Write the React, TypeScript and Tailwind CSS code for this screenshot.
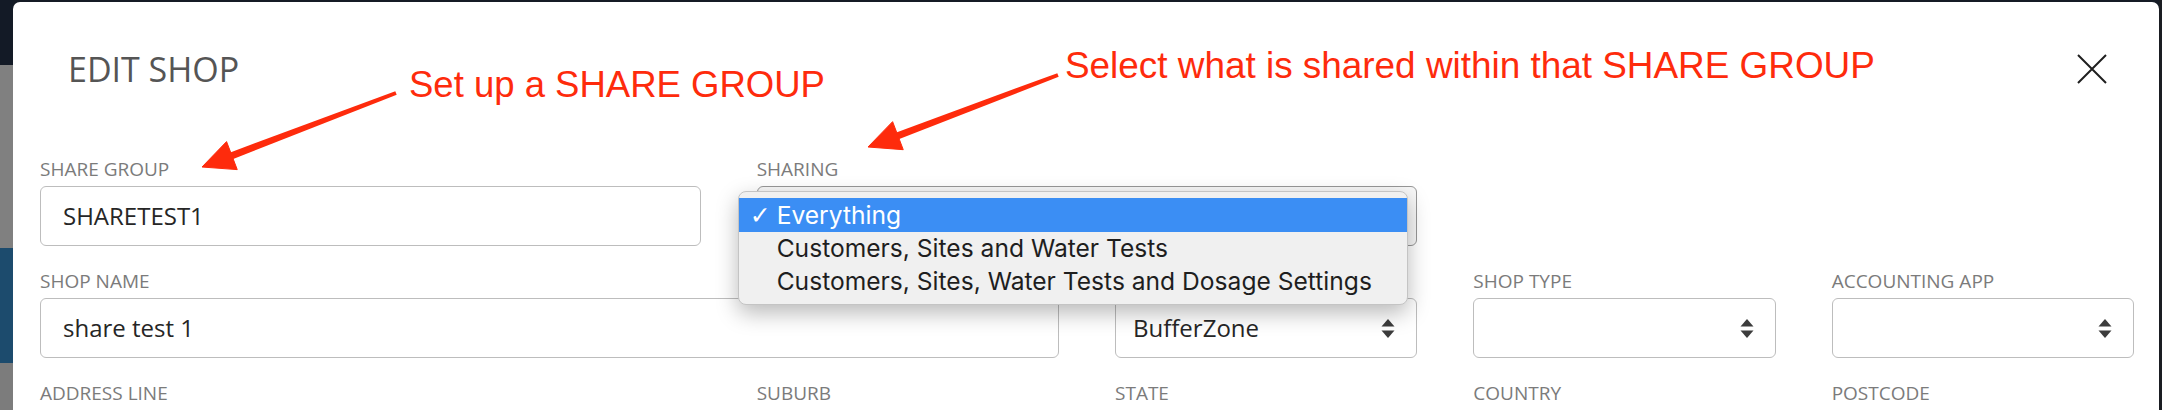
import React from "react";

type Pt = [number, number];

// Skitch-style red arrow: tapered shaft plus a solid triangular head
function Arrow({ from, to }: { from: Pt; to: Pt }) {
  const dx = to[0] - from[0];
  const dy = to[1] - from[1];
  const len = Math.hypot(dx, dy);
  const ux = dx / len;
  const uy = dy / len;
  const px = -uy;
  const py = ux;
  const headLen = 32;
  const headHalf = 15;
  const bx = to[0] - ux * headLen;
  const by = to[1] - uy * headLen;
  const tail = 2;
  const neck = 3.6;
  const shaft = [
    [from[0] + px * tail, from[1] + py * tail],
    [bx + ux * 4 + px * neck, by + uy * 4 + py * neck],
    [bx + ux * 4 - px * neck, by + uy * 4 - py * neck],
    [from[0] - px * tail, from[1] - py * tail],
  ];
  const head = [
    [to[0], to[1]],
    [bx + px * headHalf, by + py * headHalf],
    [bx - px * headHalf, by - py * headHalf],
  ];
  const toStr = (p: number[][]) => p.map((q) => q.join(",")).join(" ");
  return (
    <g fill="#fe2b0c">
      <polygon points={toStr(shaft)} />
      <polygon points={toStr(head)} strokeLinejoin="round" stroke="#fe2b0c" strokeWidth={1} />
    </g>
  );
}

function UpDown() {
  return (
    <svg width="14" height="19" viewBox="0 0 14 19" className="shrink-0">
      <path d="M7 0 L13.5 7.5 L0.5 7.5 Z" fill="#3c3c3c" />
      <path d="M7 19 L13.5 11.5 L0.5 11.5 Z" fill="#3c3c3c" />
    </svg>
  );
}

function Field({
  label,
  className = "",
  children,
}: {
  label?: string;
  className?: string;
  children?: React.ReactNode;
}) {
  return (
    <div className={`relative flex flex-col ${className}`}>
      <div className="mb-[5px] h-[24px] text-[19px] leading-[24px] text-[#7b7b7b] uppercase">{label}</div>
      {children}
    </div>
  );
}

function TextBox({ value }: { value?: string }) {
  return (
    <div className="flex h-[60px] items-center rounded-[6px] border border-[#bdbdbd] bg-white pl-[22px] text-[24px] text-[#262626]">
      {value}
    </div>
  );
}

function SelectBox({ value }: { value?: string }) {
  return (
    <div className="flex h-[60px] items-center justify-between rounded-[6px] border border-[#bdbdbd] bg-white pl-[17px] pr-[21px] text-[24px] text-[#262626]">
      <span>{value}</span>
      <UpDown />
    </div>
  );
}

const sharingOptions = [
  "Everything",
  "Customers, Sites and Water Tests",
  "Customers, Sites, Water Tests and Dosage Settings",
];

function SharingMenu() {
  return (
    <div className="absolute top-[34px] left-[-19px] z-10 w-[670px] rounded-[8px] border border-[#c4c4c4] bg-[#f0f0f0] py-[6px] font-['Inter',sans-serif] shadow-[0_8px_22px_rgba(0,0,0,0.28)]">
      {sharingOptions.map((opt, i) => (
        <div
          key={opt}
          className={`flex items-center text-[24.6px] leading-[33px] ${
            i === 0 ? "h-[34px] bg-[#3b8ef4] text-white" : "h-[33px] text-[#1e1e1e]"
          }`}
        >
          <span className="w-[38px] pl-[11px] font-['DejaVu_Sans',sans-serif] text-[25px]">{i === 0 ? "✓" : ""}</span>
          <span>{opt}</span>
        </div>
      ))}
    </div>
  );
}

export default function App() {
  return (
    <div className="relative flex h-[410px] w-[2162px] overflow-hidden bg-[#151b25] font-['Open_Sans',sans-serif]">
      {/* page behind the dialog, dimmed */}
      <div className="flex w-[13px] shrink-0 flex-col">
        <div className="h-[65px] bg-[#131a26]" />
        <div className="h-[183px] bg-[#808080]" />
        <div className="h-[115px] bg-[#1c4b6d]" />
        <div className="flex-1 bg-[#7c7c7c]" />
      </div>

      <div className="mt-[2px] flex-1 rounded-t-[7px] bg-white pr-[25px] pl-[27px]">
        <header className="flex items-center justify-between pt-[44px] pr-[27px] pl-[28px]">
          <h1 className="h-[46px] text-[34px] leading-[46px] font-normal text-[#555555]">EDIT SHOP</h1>
          <svg width="30" height="30" viewBox="0 0 30 30">
            <path d="M1 1 L29 29 M29 1 L1 29" stroke="#1f1f1f" strokeWidth="2" />
          </svg>
        </header>

        <div className="mt-[65px] grid grid-cols-6 gap-x-[56px] gap-y-[23px]">
          <Field label="Share Group" className="col-span-2">
            <TextBox value="SHARETEST1" />
          </Field>
          <Field label="Sharing" className="col-span-2">
            <div className="h-[60px] rounded-[6px] border border-[#979797] bg-[#f7f7f7]" />
            <SharingMenu />
          </Field>
          <div className="col-span-2" />

          <Field label="Shop Name" className="col-span-3">
            <TextBox value="share test 1" />
          </Field>
          {/* label sits under the open sharing menu */}
          <Field>
            <SelectBox value="BufferZone" />
          </Field>
          <Field label="Shop Type">
            <SelectBox />
          </Field>
          <Field label="Accounting App">
            <SelectBox />
          </Field>

          <Field label="Address Line" className="col-span-2">
            <TextBox />
          </Field>
          <Field label="Suburb">
            <TextBox />
          </Field>
          <Field label="State">
            <SelectBox />
          </Field>
          <Field label="Country">
            <SelectBox />
          </Field>
          <Field label="Postcode">
            <TextBox />
          </Field>
        </div>
      </div>

      <div className="w-[3px] shrink-0 bg-[#1a1d22]" />

      {/* annotations drawn on top */}
      <div className="pointer-events-none absolute inset-0 z-20 font-['Liberation_Sans',Arial,sans-serif] leading-[36px] text-[#fe2b0c]">
        <span className="absolute top-[67px] left-[409px] text-[36.5px] whitespace-nowrap">Set up a SHARE GROUP</span>
        <span className="absolute top-[48px] left-[1065px] text-[36.9px] whitespace-nowrap">
          Select what is shared within that SHARE GROUP
        </span>
        <svg className="absolute inset-0" width="2162" height="410">
          <Arrow from={[396, 93]} to={[202, 167]} />
          <Arrow from={[1058, 75]} to={[868, 147]} />
        </svg>
      </div>
    </div>
  );
}
